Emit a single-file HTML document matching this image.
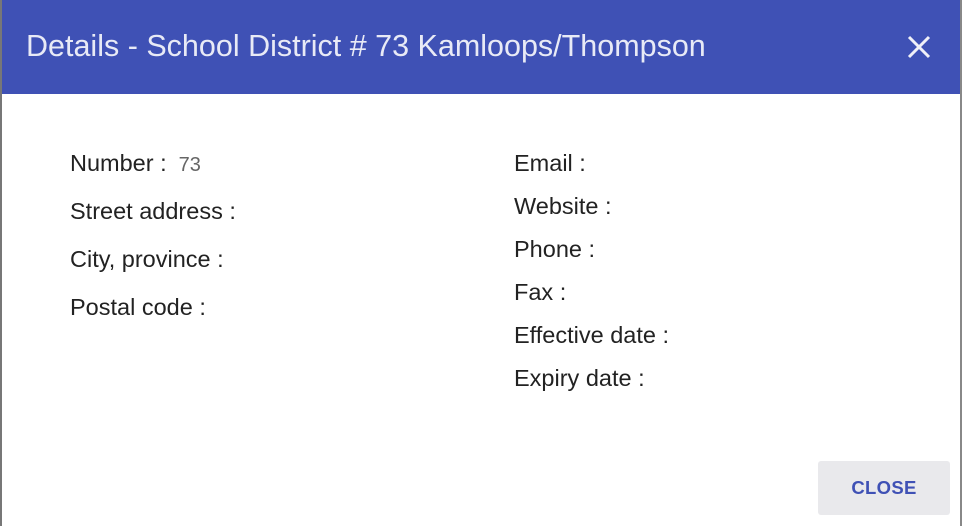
<!DOCTYPE html>
<html><head><meta charset="utf-8"><style>
html,body{margin:0;padding:0;width:962px;height:526px;overflow:hidden;background:#fff;font-family:"Liberation Sans",Roboto,sans-serif;}
.edge{position:absolute;left:0;top:0;width:2px;height:526px;background:#777;}
.edgeR{position:absolute;right:0;top:0;width:2px;height:526px;background:#888;}
.hdr{position:absolute;left:2px;top:0;width:958px;height:94px;background:#3f51b5;}
.title{position:absolute;left:26px;top:29px;font-size:30.5px;color:#e8eaf6;white-space:nowrap;}
.x{position:absolute;left:906px;top:34px;}
.l{position:absolute;font-size:23.5px;color:#222;white-space:nowrap;}
.v{font-size:20px;color:#666;margin-left:12px;}
.btn{position:absolute;left:818px;top:461px;width:132px;height:54px;background:#e9e9ec;border-radius:3px;color:#3f51b5;font-size:18.5px;font-weight:bold;text-align:center;line-height:54px;letter-spacing:0.3px;}
</style></head><body>
<div class="edge"></div><div class="edgeR"></div>
<div class="hdr"></div>
<div class="title">Details - School District # 73 Kamloops/Thompson</div>
<svg class="x" width="26" height="26" viewBox="0 0 26 26"><path d="M3 3L23 23M23 3L3 23" stroke="#f0f0f8" stroke-width="3"/></svg>
<div class="l" style="left:70px;top:150px">Number :<span class="v">73</span></div>
<div class="l" style="left:70px;top:198px">Street address :</div>
<div class="l" style="left:70px;top:246px">City, province :</div>
<div class="l" style="left:70px;top:294px">Postal code :</div>
<div class="l" style="left:514px;top:150px">Email :</div>
<div class="l" style="left:514px;top:193px">Website :</div>
<div class="l" style="left:514px;top:236px">Phone :</div>
<div class="l" style="left:514px;top:279px">Fax :</div>
<div class="l" style="left:514px;top:322px">Effective date :</div>
<div class="l" style="left:514px;top:365px">Expiry date :</div>
<div class="btn">CLOSE</div>
</body></html>
